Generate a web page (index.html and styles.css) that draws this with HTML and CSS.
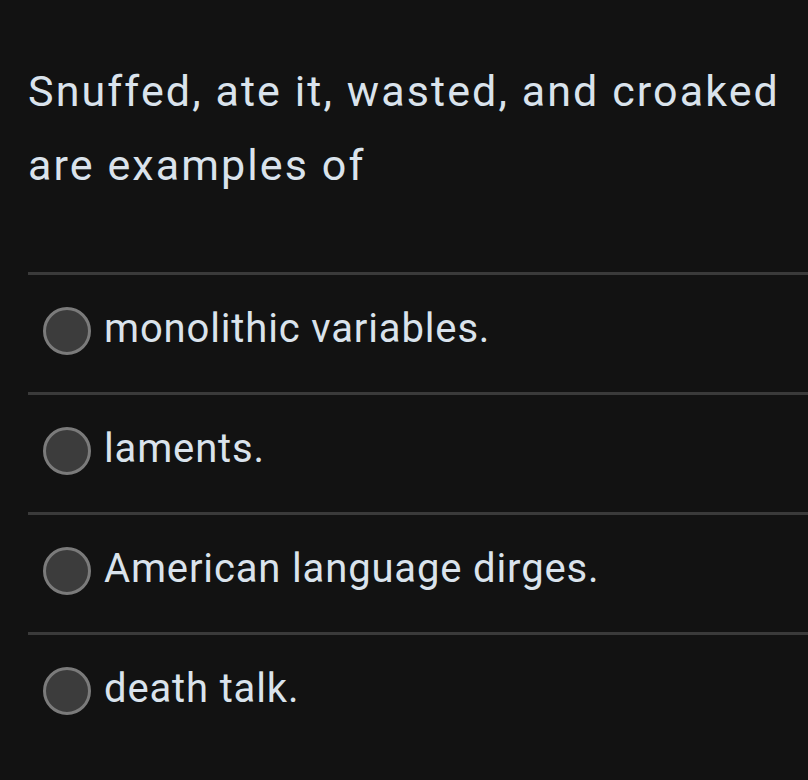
FILE: index.html
```html
<!DOCTYPE html>
<html>
<head>
<meta charset="utf-8">
<link rel="stylesheet" href="styles.css">
</head>
<body>
<main class="quiz">
  <p class="question">Snuffed, ate it, wasted, and croaked are examples of</p>
  <ul class="options">
    <li class="option"><span class="radio"></span><span class="label">monolithic variables.</span></li>
    <li class="option"><span class="radio"></span><span class="label">laments.</span></li>
    <li class="option"><span class="radio"></span><span class="label">American language dirges.</span></li>
    <li class="option"><span class="radio"></span><span class="label">death talk.</span></li>
  </ul>
</main>
</body>
</html>
```
FILE: styles.css
```css
html, body {
  margin: 0;
  padding: 0;
  background: #121212;
}
body {
  font-family: Roboto, "Liberation Sans", sans-serif;
  color: #dae3ec;
  width: 808px;
  height: 780px;
  overflow: hidden;
}
.quiz {
  padding: 54px 0 0 28px;
}
.question {
  margin: 0 0 70px 0;
  font-size: 43px;
  line-height: 74px;
  letter-spacing: 2.1px;
  padding-right: 10px;
}
.options {
  list-style: none;
  margin: 0;
  padding: 0;
}
.option {
  border-top: 3px solid #3a3a3a;
  height: 112px;
  padding: 0 0 5px 15px;
  display: flex;
  align-items: center;
  gap: 13px;
}
.radio {
  width: 42px;
  height: 42px;
  border-radius: 50%;
  border: 3px solid #7b7b7b;
  background: #3c3c3c;
  flex: none;
}
.label {
  font-size: 40px;
  line-height: 48px;
  letter-spacing: 0.85px;
  margin-bottom: 4px;
}
```
